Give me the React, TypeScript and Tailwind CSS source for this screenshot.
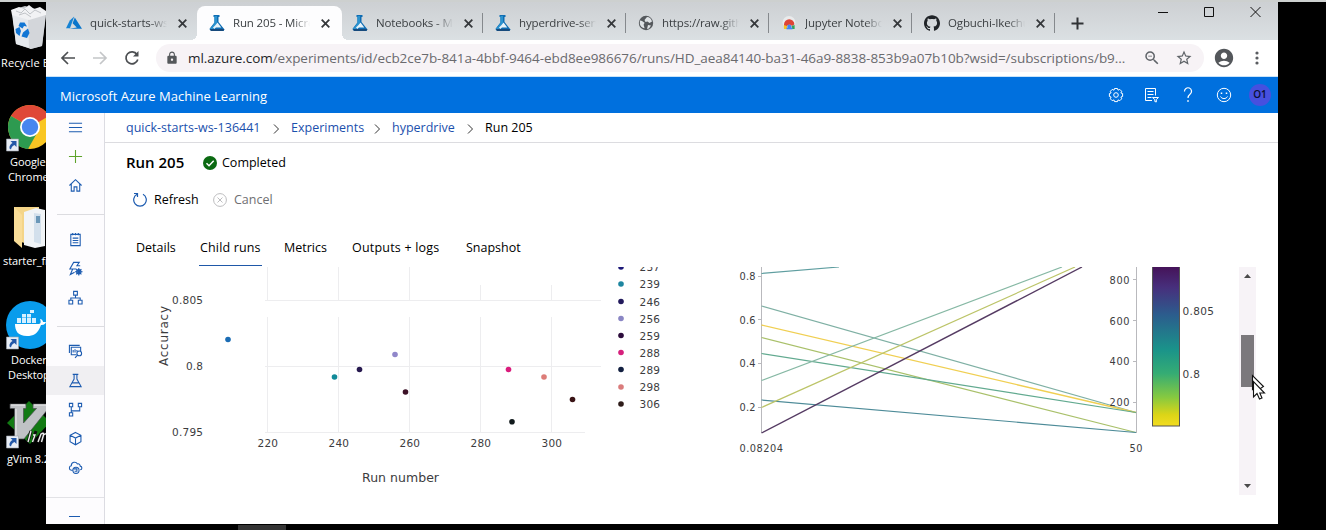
import React from "react";
import { SiGithub } from "react-icons/si";
import { MdOutlineStarBorder, MdLock, MdAccountCircle, MdZoomOut } from "react-icons/md";

const SANS = "font-['Open_Sans','Noto_Sans',sans-serif]";

function AzureLogo() {
  return (
    <svg width="16" height="16" viewBox="0 0 16 16">
      <path d="M8.2 1.5 3.8 5.4 0 13.2h4z" fill="#1583d4" />
      <path d="M8.8 2.6 6.6 8.2l4.2 4.3-7.6 1.2H16z" fill="#0a76cb" />
    </svg>
  );
}

function MlLogo() {
  return (
    <svg width="16" height="16" viewBox="0 0 16 16">
      <path d="M4.500 0h6v2h-1v5l6 7.500L14.500 16H2L.4 14l5-6.500V2h-.9z" fill="#0f6db3" />
      <path d="M5.500 1H8v7l-4 6-3.300.2L5.500 8z" fill="#2b93cf" />
      <path d="M8.500 7.600 12.300 12.500H7L5.200 14 4 12.500 6.500 10z" fill="#e6f3fa" />
      <path d="M1 14h14.300l-1 2H2z" fill="#174a7c" />
    </svg>
  );
}

function GlobeLogo() {
  return (
    <svg width="16" height="16" viewBox="0 0 16 16">
      <circle cx="8" cy="8" r="7.2" fill="#55595d" />
      <path d="M2 5.500c2 .2 3 1.200 4.600 2.200l-1 2 1 3.500C4 13 2 11 1.800 8.500zM9 2c2.500 0 4.500 2 5 4.500l-2.500 1.500-2-1.500-2 .5L6.500 5zM10 10l3 .5-2 3-2 .5z" fill="#dfe3e6" />
    </svg>
  );
}

function JupyterLogo() {
  return (
    <svg width="16" height="16" viewBox="0 0 16 16">
      <circle cx="8" cy="7.500" r="6.500" fill="#e9ebec" />
      <path d="M3 11V9.500a5.200 5.200 0 0 1 10.400 0L11 11a3 3 0 0 0-5 0z" fill="#dd4437" />
      <path d="M2.800 10 6 11v3H3z" fill="#f7c325" />
      <path d="M13.600 10 10.500 11l.5 3h2.600z" fill="#34a455" />
      <path d="M5.500 12.500h6v1.800h-6z" fill="#4285f4" />
      <circle cx="8.300" cy="11.600" r="2" fill="#4285f4" />
    </svg>
  );
}

function CloseX() {
  return (
    <svg width="9" height="9" viewBox="0 0 9 9" stroke="#35383b" strokeWidth="1.800">
      <path d="M.7.7l7.600 7.600M8.300.7.7 8.300" />
    </svg>
  );
}

const browserTabs = [
  { title: "quick-starts-ws", icon: <AzureLogo />, divider: false },
  { title: "Run 205 - Micro", icon: <MlLogo />, active: true, divider: false },
  { title: "Notebooks - Mi", icon: <MlLogo />, divider: true },
  { title: "hyperdrive-serv", icon: <MlLogo />, divider: true },
  { title: "https://raw.gith", icon: <GlobeLogo />, divider: true },
  { title: "Jupyter Notebo", icon: <JupyterLogo />, divider: true },
  { title: "Ogbuchi-Ikechu", icon: <SiGithub size={16} color="#202428" />, divider: true },
];

function TabStrip() {
  return (
    <div className="flex h-[38px] shrink-0 bg-linear-to-b from-[#cdd0d3] to-[#dbe0e3] pl-2">
      {browserTabs.map((t) => (
        <div
          key={t.title}
          className={
            "relative mt-1 flex h-[34px] shrink-0 items-center pl-3 " +
            (t.active ? "-mr-0.5 w-[145px] rounded-t-lg bg-[#fdfdfe]" : "w-[143px]")
          }
        >
          {t.active && (
            <>
              <span className="absolute -left-1.5 bottom-0 size-1.5 bg-[radial-gradient(circle_at_0_0,transparent_6px,#fdfdfe_6px)]" />
              <span className="absolute -right-1.5 bottom-0 size-1.5 bg-[radial-gradient(circle_at_100%_0,transparent_6px,#fdfdfe_6px)]" />
            </>
          )}
          <span className="w-4 shrink-0">{t.icon}</span>
          <span className="ml-2 w-[77px] shrink-0 overflow-hidden whitespace-nowrap text-[11.500px] leading-5 tracking-[-0.15px] text-[#3c4043] [mask-image:linear-gradient(to_right,black_78%,transparent)]">
            {t.title}
          </span>
          <span className="ml-[11px]"><CloseX /></span>
          {t.divider && <span className="absolute right-0 top-[7px] h-5 w-px bg-[#85898d]" />}
        </div>
      ))}
      <svg className="ml-4 mt-[15px]" width="13" height="13" viewBox="0 0 13 13" stroke="#303336" strokeWidth="2">
        <path d="M6.500.5v12M.5 6.500h12" />
      </svg>
      <svg className="ml-auto mr-[17px] mt-[3px]" width="104" height="14" viewBox="0 0 104 14" fill="none" stroke="#111" strokeWidth="1">
        <path d="M1 7.500h10M47.500 2.500h9v9h-9zM93.500 2l10 10M103.500 2l-10 10" />
      </svg>
    </div>
  );
}

function AddressBar() {
  return (
    <div className="flex h-9 shrink-0 items-center bg-white">
      <svg width="110" height="20" viewBox="0 0 110 20" fill="none" strokeWidth="1.700">
        <path d="M29 10H16M22 4l-6 6 6 6" stroke="#4c4f52" />
        <path d="M47 10h13M54 4l6 6-6 6" stroke="#c4c6c8" />
        <path d="M91 6.500a6 6 0 1 0 .8 5" stroke="#4c4f52" />
        <path d="M92.500 3v5.500H87z" fill="#4c4f52" />
      </svg>
      <div className="flex h-7 w-[1048px] items-center rounded-full bg-[#f7f3f6] pl-[9px]">
        <MdLock size={14} color="#55585b" />
        <span className="ml-[9px] w-[950px] whitespace-nowrap text-[13.500px] leading-5 tracking-[-0.05px] text-[#6a6a6e]">
          <span className="text-[#232427]">ml.azure.com</span>
          /experiments/id/ecb2ce7b-841a-4bbf-9464-ebd8ee986676/runs/HD_aea84140-ba31-46a9-8838-853b9a07b10b?wsid=/subscriptions/b9...
        </span>
        <MdZoomOut size={18} color="#5f6368" className="ml-[5px]" />
        <MdOutlineStarBorder size={18} color="#5f6368" className="ml-[14px]" />
      </div>
      <MdAccountCircle size={22} color="#54575b" className="ml-[9px]" />
      <svg className="ml-[19px]" width="6" height="16" viewBox="0 0 6 16" fill="#5a5d61">
        <circle cx="3" cy="3" r="1.600" /><circle cx="3" cy="8" r="1.600" /><circle cx="3" cy="13" r="1.600" />
      </svg>
    </div>
  );
}

function AppHeader() {
  return (
    <div className="flex h-[37px] shrink-0 items-center border-t border-[#c9e4fa] bg-[#0070de] pl-[14px] pr-[7px] pt-px">
      <span className="text-[13px] leading-5 text-white">Microsoft Azure Machine Learning</span>
      <div className="-mt-0.5 ml-auto flex items-center text-white">
        <svg width="16" height="16" viewBox="0 0 16 16" fill="none" stroke="currentColor">
          <path d="M6.500 1.500h3l.5 1.700 1.800-.8 1.900 1.900-.8 1.700 1.700.5v3l-1.700.5.800 1.800-1.900 1.900-1.800-.8-.5 1.700h-3L6 12.900l-1.800.8-1.900-1.900.8-1.800-1.700-.5v-3L3.100 6l-.8-1.700 1.900-1.900 1.800.8z" />
          <circle cx="8" cy="8" r="2.300" />
        </svg>
        <svg className="ml-5" width="16" height="16" viewBox="0 0 16 16" fill="none" stroke="currentColor">
          <path d="M8 13.500H1.500v-12h10v7M3.500 4.500h6M3.500 7.500h6M3.500 10.500h4M8.500 10.500h6l-2.200 2v2.500l-1.500-.5v-2z" />
        </svg>
        <svg className="ml-5" width="16" height="16" viewBox="0 0 16 16" fill="none" stroke="currentColor" strokeWidth="1.200">
          <path d="M4.500 4.500a3.500 3.500 0 1 1 5.800 2.400C9 8 8 8.800 8 11M8 13v2" />
        </svg>
        <svg className="ml-5" width="16" height="16" viewBox="0 0 16 16" fill="none" stroke="currentColor">
          <circle cx="8" cy="8" r="6.700" />
          <path d="M4.500 9.500c1.500 2.800 5.500 2.800 7 0" />
          <path d="M5.500 5.500v1.500M10.500 5.500v1.500" strokeWidth="1.500" />
        </svg>
        <span className="ml-[17px] flex size-[22px] items-center justify-center rounded-full bg-[#4650df] text-[10px] font-semibold text-[#0a0f33]">O1</span>
      </div>
    </div>
  );
}

const navIcons: Record<string, React.ReactNode> = {
  menu: <path d="M1 3.500h14M1 8h14M1 12.500h14" />,
  plus: <path d="M8 1v14M1 8h14" stroke="#5ea32b" />,
  home: <path d="M1.500 8 8 1.800 14.500 8M3.500 6.500v7.500h3V9.500h3V14h3V6.500" />,
  notebook: <path d="M3 2.500h10v12H3zM5 1v2.500M8 1v2.500M11 1v2.500M5 6.500h6M5 9h6M5 11.500h6" />,
  bolt: (
    <>
      <path d="M9 8.500H2L6 1.500h6L9.500 5H13M5 8.500 2.500 14.500 7 12" />
      <circle cx="11.500" cy="11.500" r="2.300" />
      <path d="M11.500 7.500v8M7.500 11.500h8M8.700 8.700l5.600 5.600M14.300 8.700l-5.600 5.600" />
    </>
  ),
  tree: <path d="M6 1.500h4v4H6zM1 11h4v4H1zM11 11h4v4h-4zM8 5.500v3M3 11V8.500h10V11" />,
  data: (
    <>
      <path d="M9 11.500H3.500v-8h10v4M1.500 9.500v-8h11M5.500 9V6.500M7.500 9V5.500M9.500 8V6.500" />
      <circle cx="12" cy="10" r="2.500" />
      <path d="M10.200 11.800 7.500 14.800" />
    </>
  ),
  flask: <path d="M5 1.500h6M6.500 1.500v5L2 14.500h12L9.500 6.500v-5M4.500 10.500h7" />,
  branch: <path d="M1.500 1.500h3.500v3.500H1.500zM1.500 11.500h3.500V15H1.500zM11 1.500h3.500v3.500H11zM3.500 5v6.500M3.500 9.500h9V5" />,
  cube: <path d="M8 1.500l5.800 3v7L8 14.700l-5.800-3.200v-7zM2.200 4.500 8 7.500l5.800-3M8 7.500v7" />,
  cloud: (
    <>
      <path d="M5 11H3.500C.8 10.500.8 6.500 3.500 6.200 3.500 2 8.500 1.200 10 4.200c2-.5 3 .8 3 2.300 2.500.3 2.300 3.600 0 4" />
      <circle cx="8.500" cy="11" r="3.300" />
      <path d="M6 9.500h3.500v2.500H7" />
    </>
  ),
};

function NavItem({ name, active }: { name: string; active?: boolean }) {
  return (
    <div className={"flex h-[29px] shrink-0 items-center justify-center " + (active ? "bg-[#f0eff2]" : "")}>
      <svg width="15" height="15" viewBox="0 0 16 16" fill="none" stroke="#1c5bb0" strokeWidth="1.150">
        {navIcons[name]}
      </svg>
    </div>
  );
}

function NavDivider() {
  return (
    <div className="flex h-[25px] shrink-0 items-center pl-[11px]">
      <div className="mt-1 h-px w-full bg-[#dcdce0]" />
    </div>
  );
}

function Sidebar() {
  return (
    <div className="flex w-[59px] shrink-0 flex-col overflow-hidden border-r border-[#dcdce2] bg-[#fdfcfe]">
      <NavItem name="menu" />
      <NavItem name="plus" />
      <NavItem name="home" />
      <NavDivider />
      <NavItem name="notebook" />
      <NavItem name="bolt" />
      <NavItem name="tree" />
      <NavDivider />
      <NavItem name="data" />
      <NavItem name="flask" active />
      <NavItem name="branch" />
      <NavItem name="cube" />
      <NavItem name="cloud" />
      <div className="mt-[15px] h-px shrink-0 bg-[#e2e2e6]" />
      <div className="ml-[23px] mt-[18px] h-px w-[11px] shrink-0 bg-[#1c5bb0]" />
    </div>
  );
}

function Chevron() {
  return (
    <svg className="mr-[11px] mt-px shrink-0" width="7" height="10" viewBox="0 0 7 10" fill="none" stroke="#333">
      <path d="M1 .5 5.500 5 1 9.500" />
    </svg>
  );
}

function Breadcrumb() {
  return (
    <div className="flex h-[30px] shrink-0 items-center border-b border-[#dcdce0] pl-[21px] pt-px text-[12.500px] text-[#1b50ad]">
      <span className="w-[147px]">quick-starts-ws-136441</span>
      <Chevron />
      <span className="w-[83px]">Experiments</span>
      <Chevron />
      <span className="w-[75px]">hyperdrive</span>
      <Chevron />
      <span className="text-black">Run 205</span>
    </div>
  );
}

function RunHeader() {
  return (
    <>
      <div className="flex h-10 shrink-0 items-center pl-[21px]">
        <span className="-mt-0.5 w-[77px] text-[15px] font-semibold text-black">Run 205</span>
        <svg width="14" height="14" viewBox="0 0 14 14" className="-mt-px">
          <circle cx="7" cy="7" r="7" fill="#0b6a12" />
          <path d="M3.500 7.200 6 9.700l4.700-5" fill="none" stroke="#fff" strokeWidth="1.500" />
        </svg>
        <span className="ml-[5px] mt-px text-[12.500px] text-black">Completed</span>
      </div>
      <div className="flex h-[34px] shrink-0 items-center pl-7 text-[12.500px]">
        <svg width="14" height="16" viewBox="0 0 14 16" fill="none" stroke="#1c5bb0" strokeWidth="1.200">
          <path d="M10 2.300a6.300 6.300 0 1 1-6 0M1 1.500h3.500V5" />
        </svg>
        <span className="ml-[7px] w-[59px] text-black">Refresh</span>
        <svg width="14" height="14" viewBox="0 0 14 14" fill="none" stroke="#bdbdbf">
          <circle cx="7" cy="7" r="6.400" />
          <path d="M4.500 4.500l5 5M9.500 4.500l-5 5" />
        </svg>
        <span className="ml-[7px] text-[#6f6f72]">Cancel</span>
      </div>
    </>
  );
}

function PageTabs() {
  return (
    <div className="flex h-[50px] shrink-0 items-end pb-px pl-[31px] text-[12.500px] leading-[34px] text-black">
      <span className="w-[63px] border-b border-transparent">Details</span>
      <span className="w-[63px] border-b border-[#1f58a8] pl-px tracking-[0.15px]">Child runs</span>
      <span className="ml-[22px] w-[68px] border-b border-transparent">Metrics</span>
      <span className="w-[114px] border-b border-transparent tracking-[0.2px]">Outputs + logs</span>
      <span className="border-b border-transparent">Snapshot</span>
    </div>
  );
}

const gridX = [
  { x: 267.5, label: "220", top: 267 },
  { x: 338.5, label: "240", top: 267 },
  { x: 409.5, label: "260", top: 267 },
  { x: 480.5, label: "280", top: 285 },
  { x: 551.5, label: "300", top: 285 },
];
const gridY = [
  { y: 300.5, label: "0.805", x: 172, w: 31, end: 601 },
  { y: 366.5, label: "0.8", x: 186, w: 17, end: 601 },
  { y: 432.5, label: "0.795", x: 172, w: 31, end: 585 },
];
const points: [number, number, string][] = [
  [228, 339.5, "#1b6cb4"],
  [334.5, 377, "#118a99"],
  [359.5, 369.5, "#27194f"],
  [395, 354.5, "#9087ca"],
  [405.5, 392, "#3b1026"],
  [508.5, 369.5, "#da1c7c"],
  [512, 421.8, "#111a1c"],
  [544, 377, "#dd7d78"],
  [572.5, 399.5, "#3a1416"],
];
const legend: [string, string, number][] = [
  ["237", "#1c1878", 267],
  ["239", "#1e86a0", 284],
  ["246", "#221a5c", 301.5],
  ["256", "#8a86c4", 318.5],
  ["259", "#2c0c3c", 335.5],
  ["288", "#d6207c", 352.5],
  ["289", "#121f40", 369.5],
  ["298", "#da7c7c", 387],
  ["306", "#2e1c1a", 404],
];
const lines: [number, number, number, string, number][] = [
  [273.5, 839, 267, "#5f9ea0", 1.2],
  [306, 1136, 412.5, "#7fb0a4", 1.2],
  [325, 1136, 412.5, "#f0cf52", 1.3],
  [337.5, 1136, 432.5, "#a9c06a", 1.2],
  [353.5, 1136, 412.5, "#62aa90", 1.2],
  [380.5, 1062, 267, "#86b8a4", 1.2],
  [400, 1136, 432.5, "#4d8b98", 1.2],
  [407.5, 1075, 267, "#bcc468", 1.2],
  [433, 1082, 267, "#553b63", 1.4],
];

function Charts() {
  return (
    <svg
      className="shrink-0 font-['DejaVu_Sans',Verdana,sans-serif]"
      width="1134"
      height="257"
      viewBox="105 267 1134 257"
      fontSize="10.500"
      fill="#3c3c3e"
    >
      <g stroke="#ededef" strokeWidth="1">
        {gridX.map((g) => (
          <path key={g.x} d={`M${g.x} ${g.top}V300M${g.x} 317V432`} />
        ))}
        {gridY.map((g) => (
          <path key={g.y} d={`M265 ${g.y}H${g.end}`} />
        ))}
      </g>
      {gridY.map((g) => (
        <text key={g.label} x={g.x} y={g.y + 3.5} textLength={g.w}>{g.label}</text>
      ))}
      {gridX.map((g) => (
        <text key={g.label} x={g.x - 10} y="447" textLength="20.500">{g.label}</text>
      ))}
      <text x="362" y="482" fontSize="12.500" textLength="77">Run number</text>
      <text transform="translate(167.500 366) rotate(-90)" fontSize="12" textLength="60">Accuracy</text>
      {points.map(([x, y, c]) => (
        <circle key={x} cx={x} cy={y} r="2.800" fill={c} />
      ))}
      {legend.map(([label, c, y]) => (
        <g key={label}>
          <circle cx="621" cy={y} r="2.800" fill={c} />
          <text x="639.500" y={y + 4.2} textLength="20.500">{label}</text>
        </g>
      ))}

      <path d="M761.500 267V433M1136.500 267V433M758 276.500h4M758 319.500h4M758 363.500h4M758 407.500h4M1133 279.500h4M1133 320.500h4M1133 361.500h4M1133 402.500h4" fill="none" stroke="#b9b9bd" />
      {lines.map(([y1, x2, y2, c, w]) => (
        <line key={y1} x1="761.500" y1={y1} x2={x2} y2={y2} stroke={c} strokeWidth={w} />
      ))}
      <g fontSize="9.800">
        {([["0.8", 279.5], ["0.6", 323.5], ["0.4", 367], ["0.2", 410.5]] as [string, number][]).map(([t, y]) => (
          <text key={t} x="739.500" y={y} textLength="16">{t}</text>
        ))}
        {([["800", 283.5], ["600", 324.5], ["400", 364.5], ["200", 405.5]] as [string, number][]).map(([t, y]) => (
          <text key={t} x="1109.500" y={y} textLength="20">{t}</text>
        ))}
        <text x="739.500" y="451.500" textLength="43.500">0.08204</text>
        <text x="1129.500" y="451.500" textLength="13">50</text>
      </g>
      <defs>
        <linearGradient id="scale" x1="0" y1="0" x2="0" y2="1">
          <stop offset="0" stopColor="#451258" />
          <stop offset="0.13" stopColor="#472f7c" />
          <stop offset="0.3" stopColor="#2c5c8d" />
          <stop offset="0.52" stopColor="#1a938a" />
          <stop offset="0.67" stopColor="#35ac74" />
          <stop offset="0.82" stopColor="#86c940" />
          <stop offset="0.93" stopColor="#dcd517" />
          <stop offset="1" stopColor="#f3dc20" />
        </linearGradient>
      </defs>
      <rect x="1152.500" y="266.500" width="27" height="159.500" fill="url(#scale)" stroke="#555" />
      <text x="1182.500" y="315" textLength="31.500">0.805</text>
      <text x="1182.500" y="378" textLength="17.500">0.8</text>
    </svg>
  );
}

function Scrollbar() {
  return (
    <div className="flex h-[228px] w-[17px] shrink-0 flex-col items-center bg-[#f7f3f7]">
      <svg className="mt-[7px]" width="7" height="4" viewBox="0 0 7 4"><path d="M0 4 3.500 0 7 4z" fill="#4a4a4a" /></svg>
      <div className="mt-[57px] h-[52px] w-[13px] bg-[#7b787c]" />
      <svg className="mt-[97px]" width="7" height="4" viewBox="0 0 7 4"><path d="M0 0h7L3.500 4z" fill="#4a4a4a" /></svg>
    </div>
  );
}

function Shortcut() {
  return (
    <g>
      <path d="M0 0h12v12H0z" fill="#e8edf5" stroke="#9aa3ad" strokeWidth=".6" />
      <path d="M10 2v6L8 6Q5 7 4.500 10.500L3 9.500Q2.500 6 6 4L4 2z" fill="#2458a8" />
    </g>
  );
}

function Desktop() {
  const label = "absolute whitespace-nowrap text-[11px] leading-[15px] text-white";
  return (
    <div className="relative h-[522px] w-[46px] shrink-0 overflow-hidden">
      <svg className="absolute left-0 top-0" width="46" height="522" viewBox="0 2 46 522">
        <path d="M12 10 25 6l21 6-4 34-11 3-15-5z" fill="#c6c9cd" />
        <path d="M12 14 28 19l18-4-4 31-12 3z" fill="#d3d6da" />
        <path d="M12 14 28 19l1 29-13-4z" fill="#e6e9ed" />
        <path d="M11 10l8-3 5 2 5-4 5 4 6-2 6 4v4l-17 5-17-5z" fill="#f1f2f4" />
        <path d="M16 11l5 2 4-4 5 5 5-4 6 3M19 15l6-2 6 4" fill="none" stroke="#b4b8bd" strokeWidth=".8" />
        <path d="M20 22.500l4.500 0 2.500 4-3-.5-1.500 2.500-4-2.500zM15.500 29l4-2 1.500 4-1.500 5-3.500-3zM23 32.500l5-4 1.500 4.500-2.500 5-5.500-1.500z" fill="#1276d4" />

        <circle cx="30" cy="127" r="22" fill="#f9c623" />
        <path d="M30 127 11 116a22 22 0 0 1 38 0z" fill="#df4837" />
        <path d="M30 127 11 116a22 22 0 0 0 17 33l9-16z" fill="#2d9a50" />
        <circle cx="30" cy="127" r="10" fill="#fff" />
        <circle cx="30" cy="127" r="8.200" fill="#4786ef" />
        <g transform="translate(6.500 139)"><Shortcut /></g>

        <path d="M14 207l25 0v40L14 240z" fill="#f4d588" />
        <path d="M24 212l12-4 9 2v36l-10 2-11-3z" fill="#f1f4f7" />
        <path d="M34 213l7 1v30l-7-2z" fill="#d3e0ec" />
        <path d="M36 216h4v7h-4z" fill="#6a97b8" />
        <path d="M14 207l8 8v33l-8-7z" fill="#f9dd98" />

        <circle cx="30" cy="325" r="24" fill="#099cec" />
        <path d="M15 324h24c2 0 2-3 1-5 2 0 3 2 3 3l3 0c-1 3-4 3-5 3-3 9-8 11-14 11-9 0-12-5-12-12z" fill="#fff" />
        <path d="M17 318h4v5h-4zM22 318h4v5h-4zM27 318h4v5h-4zM32 318h4v5h-4zM22 314h4v3.500h-4zM27 314h4v3.500h-4zM30 310h4v3h-4z" fill="#d6f0ff" />
        <g transform="translate(6.500 337)"><Shortcut /></g>

        <path d="M29 401l21 21-20 22L7 423z" fill="#127a13" />
        <path d="M10 404h16v4.500h-2.500V423l13-14.500H33V404h15v5L24 439h-9.500V408.500H10z" fill="#c0c2c5" stroke="#4a4d50" strokeWidth=".7" />
        <path d="M11 405h14M16 409v29M34 405h12" stroke="#eeeeef" fill="none" />
        <path d="M31 431l-3 11M36 431q-3 8-2 11M38 442l3-8q3-2 2.500 1l-2 7M43 434q3-1.500 4 0" fill="none" stroke="#111" strokeWidth="3" />
        <path d="M31 431l-3 11M38 442l3-8q3-2 2.500 1l-2 7M43.500 435q2.500-2 4-1M33 435h2l-2.500 7" fill="none" stroke="#eee" strokeWidth="1.400" />
        <g transform="translate(6.500 436)"><Shortcut /></g>
      </svg>
      <span className={label + " left-px top-[53px] tracking-[0.1px]"}>Recycle Bin</span>
      <span className={label + " left-[10px] top-[152px] tracking-[-0.1px]"}>Google</span>
      <span className={label + " left-[8px] top-[167px] tracking-[-0.1px]"}>Chrome</span>
      <span className={label + " left-[3px] top-[251px] tracking-[-0.1px]"}>starter_files</span>
      <span className={label + " left-[11px] top-[350px] tracking-[-0.1px]"}>Docker</span>
      <span className={label + " left-[8px] top-[365px] tracking-[-0.1px]"}>Desktop</span>
      <span className={label + " left-[7px] top-[449px] tracking-[-0.1px]"}>gVim 8.2</span>
    </div>
  );
}

function Cursor() {
  return (
    <svg className="absolute left-[1250px] top-[374px]" width="20" height="28" viewBox="0 0 20 28" fill="#fff" stroke="#111" strokeWidth="1.100">
      <path d="M2.500 1.500v14l3-3 2 4 6-4z" />
      <path d="M3.500 7.500v15.500l3.500-3.500 2.500 5.500 2.500-1-2.200-5h4.700z" />
    </svg>
  );
}

export default function App() {
  return (
    <div className={"relative flex h-[530px] w-[1326px] flex-col overflow-hidden bg-black " + SANS}>
      <div className="h-0.5 shrink-0 bg-[#cdd0cf]" />
      <div className="flex h-[522px] shrink-0">
        <Desktop />
        <div className="flex w-[1232px] shrink-0 flex-col overflow-hidden bg-white">
          <TabStrip />
          <AddressBar />
          <AppHeader />
          <div className="flex min-h-0 flex-1">
            <Sidebar />
            <div className="flex min-w-0 flex-1 flex-col bg-white">
              <Breadcrumb />
              <RunHeader />
              <PageTabs />
              <div className="flex items-start">
                <Charts />
                <Scrollbar />
              </div>
            </div>
          </div>
        </div>
      </div>
      <div className="ml-[238px] mt-px h-[5px] w-12 bg-[#343434]" />
      <Cursor />
    </div>
  );
}
